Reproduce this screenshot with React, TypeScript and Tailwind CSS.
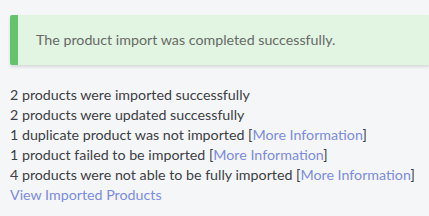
const link = "text-[#7b8ce0]";

export default function App() {
  return (
    <div
      className="bg-[#f5f6f8] min-h-[216px] pt-[15px] pl-[10px] text-[14.25px] leading-[20px] text-[#3c3f44]"
      style={{ fontFamily: "Lato, sans-serif" }}
    >
      <div className="flex h-[50px] items-center bg-[#e2f4e2] border-l-[8px] border-[#62c46f] rounded-l-[2px] pl-[18px] text-[#666b66] shadow-[0_2px_3px_rgba(0,0,0,0.12)]">
        The product import was completed successfully.
      </div>
      <div className="mt-[20px]">
        <div>2 products were imported successfully</div>
        <div>2 products were updated successfully</div>
        <div>
          1 duplicate product was not imported [<span className={link}>More Information</span>]
        </div>
        <div>
          1 product failed to be imported [<span className={link}>More Information</span>]
        </div>
        <div>
          4 products were not able to be fully imported [<span className={link}>More Information</span>]
        </div>
        <div className={link}>View Imported Products</div>
      </div>
    </div>
  );
}
